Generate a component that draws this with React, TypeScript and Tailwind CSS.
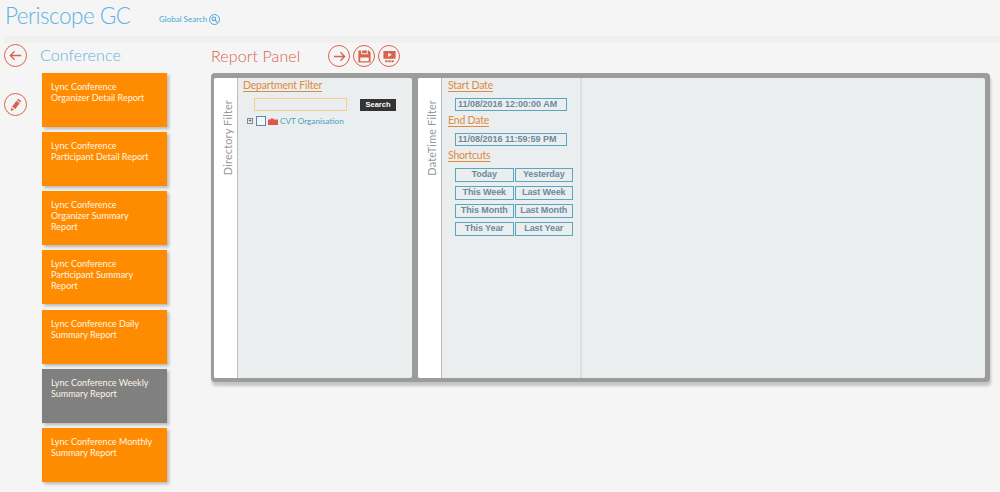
import React from "react";

const reports: { lines: string[]; active?: boolean }[] = [
  { lines: ["Lync Conference", "Organizer Detail Report"] },
  { lines: ["Lync Conference", "Participant Detail Report"] },
  { lines: ["Lync Conference", "Organizer Summary", "Report"] },
  { lines: ["Lync Conference", "Participant Summary", "Report"] },
  { lines: ["Lync Conference Daily", "Summary Report"] },
  { lines: ["Lync Conference Weekly", "Summary Report"], active: true },
  { lines: ["Lync Conference Monthly", "Summary Report"] },
];

const shortcuts = ["Today", "Yesterday", "This Week", "Last Week", "This Month", "Last Month", "This Year", "Last Year"];

function Ring({ children, className }: { children: React.ReactNode; className?: string }) {
  return (
    <div className={`flex h-[22px] w-[22px] shrink-0 items-center justify-center rounded-full border-[1.5px] border-[#d9634e] ${className ?? ""}`}>
      {children}
    </div>
  );
}

function Tab({ label }: { label: string }) {
  return (
    <div className="flex w-[24px] shrink-0 justify-center border-r border-[#bdbdbd] bg-white pl-[6px] pt-[22px]">
      <span className="h-fit rotate-180 text-[10.8px] tracking-[0.2px] text-[#999999] [writing-mode:vertical-rl]">{label}</span>
    </div>
  );
}

function Heading({ children }: { children: React.ReactNode }) {
  return <div className="text-[10.5px] leading-[14px] tracking-[-0.2px] text-[#e08a3c] underline underline-offset-2">{children}</div>;
}

function DateBox({ value }: { value: string }) {
  return (
    <div className="mb-[2px] ml-[7px] mt-[6px] h-[13px] w-[112px] border border-[#5aa5c0] bg-[#eaeeef] pl-[2px] font-['Liberation_Sans',sans-serif] text-[9px] font-bold leading-[11px] text-[#6d8a9c]">
      {value}
    </div>
  );
}

export default function App() {
  return (
    <div className="h-[492px] w-[1000px] overflow-hidden bg-[#f5f5f5] font-['Lato',sans-serif]">
      <header className="flex h-[36px] items-start pl-[5px]">
        <h1 className="w-[124px] whitespace-nowrap text-[22.5px] font-light leading-[32px] tracking-[-0.5px] text-[#5cb3e0]">Periscope GC</h1>
        <div className="ml-[30px] mt-[13px] flex items-center gap-[2px] text-[8px] leading-[12px] text-[#4ba6d8]">
          <span>Global Search</span>
          <div className="flex h-[11px] w-[11px] items-center justify-center rounded-full border border-[#4ba6d8]">
            <svg viewBox="0 0 10 10" className="h-[7px] w-[7px]" fill="none" stroke="#4ba6d8" strokeWidth="1.6">
              <circle cx="4" cy="4" r="2.6" />
              <path d="M6 6l3 3" />
            </svg>
          </div>
        </div>
      </header>
      <div className="ml-[5px] h-[7px] bg-[#f0f0f0]" />

      <div className="flex">
        <div className="ml-[4px] flex w-[23px] shrink-0 flex-col pt-[1px]">
          <Ring className="h-[23px] w-[23px]">
            <svg viewBox="0 0 16 16" className="h-[15px] w-[15px]" fill="none" stroke="#d9634e" strokeWidth="1.4">
              <path d="M14 8H2.5M7 3.5L2.5 8 7 12.5" />
            </svg>
          </Ring>
          <Ring className="mt-[26px] h-[23px] w-[23px]">
            <svg viewBox="0 0 16 16" className="h-[15px] w-[15px]" fill="#d9634e">
              <path d="M10.7 1.8l3.5 2.5-1.1 1.5-3.5-2.5zM9 4.1l3.5 2.5-4.7 6.3-3.5-2.5zM3.5 11.3l3 2.2-3.5 1.3z" />
            </svg>
          </Ring>
        </div>

        <div className="ml-[13px] w-[127px] shrink-0">
          <h2 className="h-[23px] text-[16px] font-light leading-[24px] tracking-[0.1px] text-[#5cb3e0]">Conference</h2>
          <div className="ml-[2px] mt-[7px] flex flex-col gap-[5.17px]">
            {reports.map((r) => (
              <div
                key={r.lines.join(" ")}
                className={`h-[54px] w-[125px] pl-[9px] pt-[8px] text-[9px] leading-[11px] text-[#fff4e4] shadow-[2px_2px_3px_rgba(0,0,0,0.25)] ${r.active ? "bg-[#808080]" : "bg-[#ff8c00]"}`}
              >
                {r.lines.map((l) => (
                  <div key={l}>{l}</div>
                ))}
              </div>
            ))}
          </div>
        </div>

        <div className="ml-[44px] flex w-[779px] flex-col">
          <div className="flex h-[30px] items-start pt-[2px]">
            <h2 className="w-[117px] text-[16px] font-light leading-[22px] tracking-[0.1px] text-[#d9634e]">Report Panel</h2>
            <div className="flex gap-[3px]">
              <Ring>
                <svg viewBox="0 0 16 16" className="h-[15px] w-[15px]" fill="none" stroke="#d9634e" strokeWidth="1.4">
                  <path d="M2 8h11.5M9 3.5L13.5 8 9 12.5" />
                </svg>
              </Ring>
              <Ring>
                <svg viewBox="0 0 16 16" className="h-[15px] w-[15px]" fill="#d9634e">
                  <path d="M1.5 1.5h11l2 2v11h-13zM4.5 1.5v4h7v-4h-1v3h-5v-3zM3.5 9v4h9V9z" fillRule="evenodd" />
                </svg>
              </Ring>
              <Ring>
                <svg viewBox="0 0 16 16" className="h-[15px] w-[15px]" fill="#d9634e">
                  <path d="M1.5 2h13v8.5h-13zM6.5 4v4.5l4-2.25z" fillRule="evenodd" />
                  <path d="M3.5 12h2.4v2H3.5zM6.8 12h2.4v2H6.8zM10.1 12h2.4v2h-2.4z" />
                </svg>
              </Ring>
            </div>
          </div>

          <div className="flex h-[309px] w-[779px] rounded-[4px] bg-[#9c9c9c] pb-[4px] pl-[3px] pr-[5px] pt-[5px] shadow-[1px_4px_3px_rgba(0,0,0,0.2)]">
            <div className="flex w-[198px] shrink-0 overflow-hidden rounded-[2px] bg-[#eaeeef]">
              <Tab label="Directory Filter" />
              <div className="flex-1 pl-[5px]">
                <Heading>Department Filter</Heading>
                <div className="mt-[6px] flex items-center">
                  <div className="ml-[11px] h-[13px] w-[93px] border border-[#f0d090] bg-[#eaeeef]" />
                  <div className="ml-[13px] flex h-[12px] w-[36px] items-center justify-center bg-[#333333] font-['Liberation_Sans',sans-serif] text-[7.5px] font-bold text-white">
                    Search
                  </div>
                </div>
                <div className="ml-[4px] mt-[4px] flex h-[12px] items-center">
                  <div className="flex h-[6px] w-[6px] items-center justify-center border border-[#888] text-[6px] leading-none text-[#333]">+</div>
                  <div className="ml-[3px] h-[10px] w-[10px] border border-[#5f86ad] bg-[#f4f6f8]" />
                  <svg viewBox="0 0 10 7" className="ml-[2px] h-[7px] w-[10px]" fill="#d9584a">
                    <path d="M0 1.5h2.5V0.5h3v1H10v5.5H0z" />
                  </svg>
                  <span className="ml-[2px] text-[8.2px] leading-[12px] text-[#4aa0c0]">CVT Organisation</span>
                </div>
              </div>
            </div>

            <div className="ml-[6px] flex flex-1 overflow-hidden rounded-[2px] bg-[#eaeeef]">
              <Tab label="DateTime Filter" />
              <div className="w-[140px] shrink-0 border-r-2 border-[#dcdfe0] pl-[6px]">
                <Heading>Start Date</Heading>
                <DateBox value="11/08/2016 12:00:00 AM" />
                <Heading>End Date</Heading>
                <DateBox value="11/08/2016 11:59:59 PM" />
                <Heading>Shortcuts</Heading>
                <div className="ml-[7px] mt-[6px] grid w-[118px] grid-cols-2 gap-x-[1px] gap-y-[4px]">
                  {shortcuts.map((s) => (
                    <div
                      key={s}
                      className="flex h-[14px] items-center justify-center border border-[#5aa5c0] font-['Liberation_Sans',sans-serif] text-[9px] font-bold tracking-[-0.1px] text-[#6d8a9c]"
                    >
                      {s}
                    </div>
                  ))}
                </div>
              </div>
            </div>
          </div>
        </div>
      </div>
    </div>
  );
}
